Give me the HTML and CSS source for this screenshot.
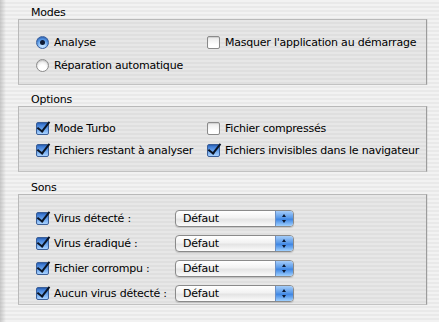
FILE: index.html
```html
<!DOCTYPE html>
<html lang="fr">
<head>
<meta charset="utf-8">
<title>Préférences</title>
<link rel="stylesheet" href="styles.css">
</head>
<body>
<div class="edge"></div>
<main class="pane">
  <section class="group g-modes">
    <div class="legend">Modes</div>
    <div class="box grid2 modes">
      <label class="ctl"><span class="radio on"></span>Analyse</label>
      <label class="ctl"><span class="check"></span>Masquer l'application au démarrage</label>
      <label class="ctl"><span class="radio"></span>Réparation automatique</label>
      <span></span>
    </div>
  </section>

  <section class="group g-options">
    <div class="legend">Options</div>
    <div class="box grid2 options">
      <label class="ctl"><span class="check on"></span>Mode Turbo</label>
      <label class="ctl"><span class="check"></span>Fichier compressés</label>
      <label class="ctl"><span class="check on"></span>Fichiers restant à analyser</label>
      <label class="ctl"><span class="check on"></span>Fichiers invisibles dans le navigateur</label>
    </div>
  </section>

  <section class="group g-sons">
    <div class="legend">Sons</div>
    <div class="box sons">
      <div class="srow"><label class="ctl slabel"><span class="check on"></span>Virus détecté :</label><div class="popup"><span class="ptext">Défaut</span><span class="arrows"></span></div></div>
      <div class="srow"><label class="ctl slabel"><span class="check on"></span>Virus éradiqué :</label><div class="popup"><span class="ptext">Défaut</span><span class="arrows"></span></div></div>
      <div class="srow"><label class="ctl slabel"><span class="check on"></span>Fichier corrompu :</label><div class="popup"><span class="ptext">Défaut</span><span class="arrows"></span></div></div>
      <div class="srow"><label class="ctl slabel"><span class="check on"></span>Aucun virus détecté :</label><div class="popup"><span class="ptext">Défaut</span><span class="arrows"></span></div></div>
    </div>
  </section>
</main>
</body>
</html>
```
FILE: styles.css
```css
* { box-sizing: border-box; }
html, body { margin: 0; padding: 0; }
body {
  width: 439px;
  height: 322px;
  overflow: hidden;
  font-family: "DejaVu Sans", "Liberation Sans", sans-serif;
  font-size: 11px;
  letter-spacing: -0.22px;
  color: #000;
  background: repeating-linear-gradient(to bottom, #f2f2f2 0 2px, #e9e9e9 2px 4px);
  position: relative;
}
.edge {
  position: absolute;
  left: 0; top: 0; bottom: 0;
  width: 6px;
  background: linear-gradient(to right, rgba(150,150,150,0.45), rgba(150,150,150,0));
}
.pane {
  padding: 7px 12px 0 18px;
  display: flex;
  flex-direction: column;
}
.group { display: flex; flex-direction: column; }
.g-options { margin-top: 9px; }
.g-sons { margin-top: 10px; }
.legend {
  height: 12px;
  line-height: 12px;
  padding-left: 13px;
}
.box {
  border: 1px solid #b9b9b9;
  border-right-color: #9c9c9c;
  border-bottom-color: #c2c2c2;
  background: repeating-linear-gradient(to bottom, #e7e7e7 0 2px, #dfdfdf 2px 4px);
  box-shadow: 1px 0 0 rgba(0,0,0,0.06);
}
.grid2 {
  display: grid;
  grid-template-columns: 171px 1fr;
  padding-left: 17px;
}
.modes { height: 66px; padding-top: 13px; row-gap: 5px; grid-auto-rows: 18px; }
.options { height: 66px; padding-top: 12px; row-gap: 4px; grid-auto-rows: 18px; }
.ctl {
  display: flex;
  align-items: center;
  gap: 5px;
  height: 18px;
  white-space: nowrap;
}
.radio, .check {
  flex: none;
  width: 13px;
  height: 13px;
  display: inline-block;
  position: relative;
}
.radio {
  border-radius: 50%;
  border: 1px solid #8c8c8c;
  background: radial-gradient(circle at 50% 75%, #ffffff 0 35%, #e2e2e2 80%);
  box-shadow: inset 0 1px 1px rgba(0,0,0,0.15);
}
.radio.on {
  border-color: #3a5f9c;
  background: radial-gradient(circle at 50% 80%, #b9dcff 0 20%, #5c9be6 55%, #2a64c4 100%);
}
.radio.on::after {
  content: "";
  position: absolute;
  left: 3px; top: 3px;
  width: 5px; height: 5px;
  border-radius: 50%;
  background: #0d1a33;
}
.check {
  border: 1px solid #8a8a8a;
  border-radius: 2px;
  background: linear-gradient(to bottom, #e9e9e9, #ffffff 70%);
  box-shadow: inset 0 1px 1px rgba(0,0,0,0.12);
}
.check.on {
  border-color: #3b5f98;
  background: linear-gradient(to bottom, #2f6cca, #6aa5ee 55%, #a9d2ff);
}
.check.on::after {
  content: "";
  position: absolute;
  left: 3px; top: -4px;
  width: 5px; height: 11px;
  border-right: 2.5px solid #0a1424;
  border-bottom: 2.5px solid #0a1424;
  transform: rotate(38deg);
  transform-origin: 50% 50%;
}
.sons {
  height: 111px;
  padding: 14px 0 0 17px;
  display: flex;
  flex-direction: column;
  gap: 7px;
}
.srow {
  display: flex;
  align-items: center;
  height: 18px;
}
.slabel { width: 139px; }
.popup {
  width: 119px;
  height: 17px;
  border: 1px solid #8a8a8a;
  border-radius: 4px;
  background: linear-gradient(to bottom, #ffffff, #f2f2f2 45%, #e4e4e4 55%, #fbfbfb);
  display: flex;
  align-items: center;
  overflow: hidden;
  box-shadow: 0 1px 1px rgba(0,0,0,0.15);
}
.ptext { flex: 1; padding-left: 7px; line-height: 15px; }
.arrows {
  width: 18px;
  height: 100%;
  border-left: 1px solid #6b8fc4;
  background: linear-gradient(to bottom, #a5cdfa, #5a9ae9 45%, #3f86e3 55%, #9fd0ff);
  position: relative;
}
.arrows::before, .arrows::after {
  content: "";
  position: absolute;
  left: 6px;
  border-left: 2.5px solid transparent;
  border-right: 2.5px solid transparent;
}
.arrows::before { top: 3px; border-bottom: 3px solid #0b1830; }
.arrows::after { top: 9px; border-top: 3px solid #0b1830; }
```
